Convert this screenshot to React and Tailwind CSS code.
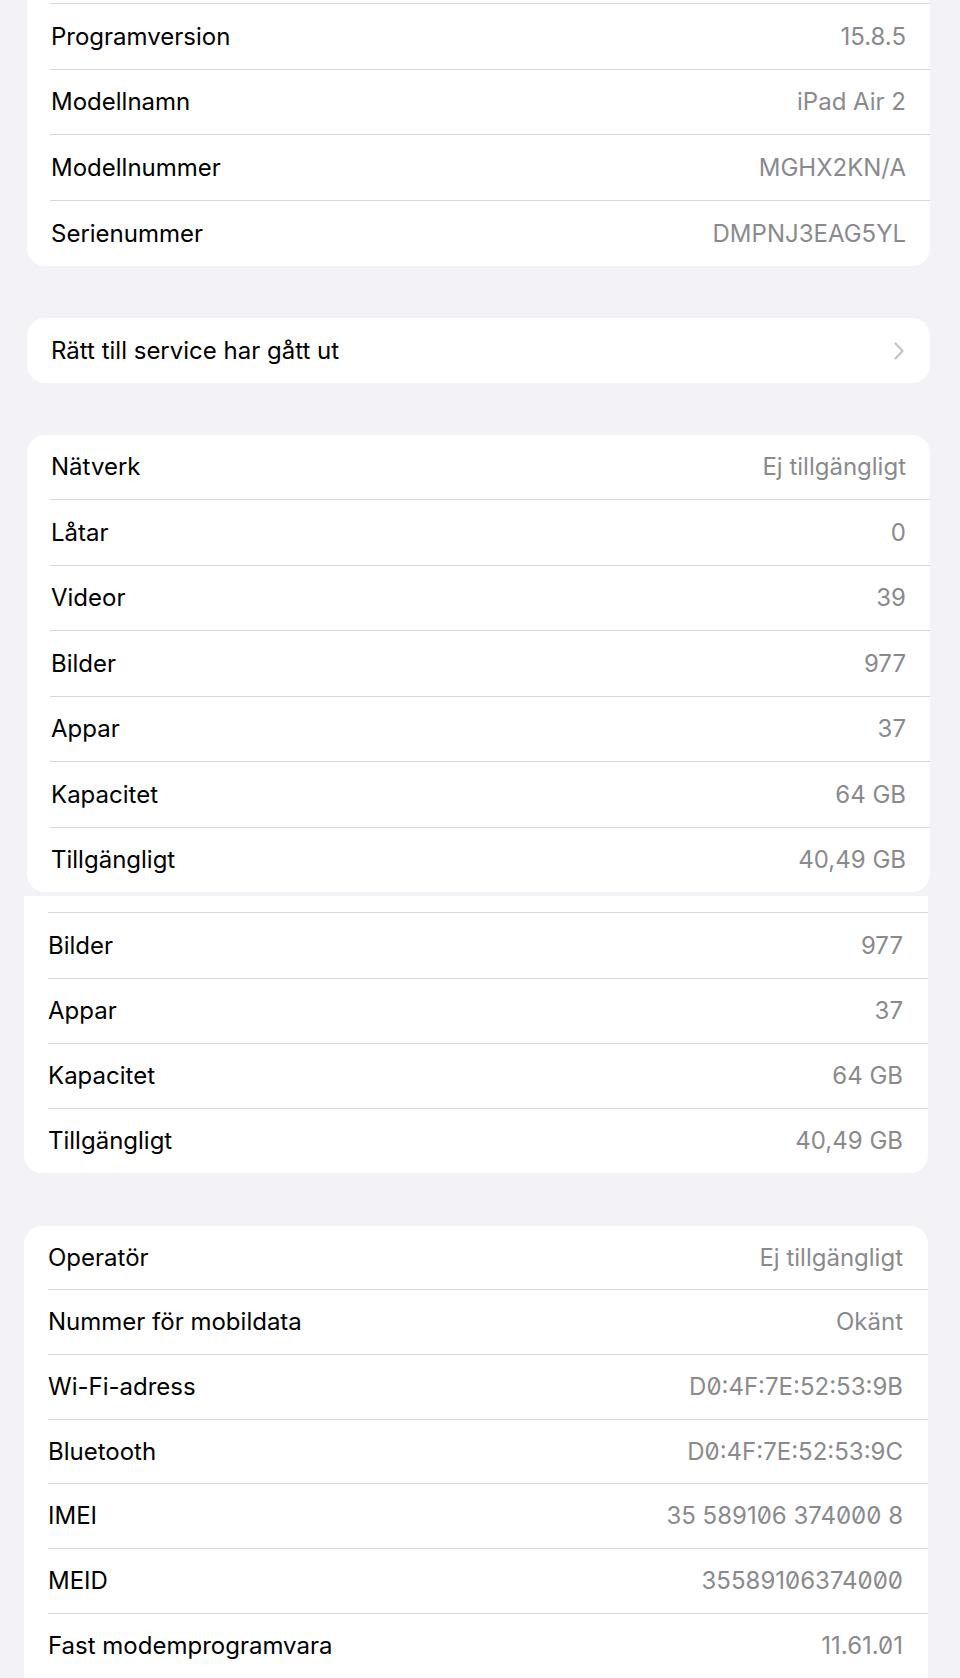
import React from 'react'

const sep = 'border-t border-[#d8d8dc]'

const Row = ({ label, value, h, first, mono, inset = 'pl-[23px]', pad = 'pl-px pr-6', chevron }) => (
  <div className={inset}>
    <div className={`flex items-center justify-between ${pad} ${first ? '' : sep}`} style={{ height: h }}>
      <span className="text-black">{label}</span>
      {chevron ? (
        <svg width="12" height="20" viewBox="0 0 12 20" fill="none" className="mr-[1px]">
          <path d="M2.5 2.5 L9.5 10 L2.5 17.5" stroke="#c4c4c8" strokeWidth="2.2" strokeLinecap="round" strokeLinejoin="round" />
        </svg>
      ) : (
        <span className={`text-[#8a8a8e] ${mono ? 'slashed-zero' : ''}`}>{value}</span>
      )}
    </div>
  </div>
)

export default function App() {
  const cardA = [
    ['Programversion', '15.8.5', 66],
    ['Modellnamn', 'iPad Air 2', 65],
    ['Modellnummer', 'MGHX2KN/A', 66],
    ['Serienummer', 'DMPNJ3EAG5YL', 66],
  ]
  const cardC = [
    ['Nätverk', 'Ej tillgängligt', 64],
    ['Låtar', '0', 66],
    ['Videor', '39', 65],
    ['Bilder', '977', 66],
    ['Appar', '37', 65],
    ['Kapacitet', '64 GB', 66],
    ['Tillgängligt', '40,49 GB', 65],
  ]
  const cardE = [
    ['Bilder', '977', 66],
    ['Appar', '37', 65],
    ['Kapacitet', '64 GB', 65],
    ['Tillgängligt', '40,49 GB', 65],
  ]
  const cardD = [
    ['Operatör', 'Ej tillgängligt', 63, false],
    ['Nummer för mobildata', 'Okänt', 65, false],
    ['Wi-Fi-adress', 'D0:4F:7E:52:53:9B', 65, true],
    ['Bluetooth', 'D0:4F:7E:52:53:9C', 64, true],
    ['IMEI', '35 589106 374000 8', 65, true],
    ['MEID', '35589106374000', 65, true],
    ['Fast modemprogramvara', '11.61.01', 65, true],
  ]

  return (
    <div className="w-[960px] h-[1678px] overflow-hidden bg-[#f2f2f7] font-['Inter','Noto_Sans',sans-serif] text-[24px]">
      {/* first capture */}
      <div className="pl-[27px] pr-[30px]">
        <div className="bg-white rounded-b-[18px]">
          <div className="h-[3px]" />
          {cardA.map(([l, v, h]) => (
            <Row key={l} label={l} value={v} h={h} />
          ))}
        </div>

        <div className="h-[52px]" />
        <div className="bg-white rounded-[18px]">
          <Row label="Rätt till service har gått ut" h={65} first chevron />
        </div>

        <div className="h-[52px]" />
        <div className="bg-white rounded-[18px]">
          {cardC.map(([l, v, h], i) => (
            <Row key={l} label={l} value={v} h={h} first={i === 0} />
          ))}
        </div>
        <div className="h-[4px]" />
      </div>

      {/* second capture */}
      <div className="pl-[24px] pr-[32px]">
        <div className="bg-white rounded-b-[18px]">
          <div className="h-[16px]" />
          {cardE.map(([l, v, h]) => (
            <Row key={l} label={l} value={v} h={h} inset="pl-[24px]" pad="pr-[25px]" />
          ))}
        </div>

        <div className="h-[53px]" />
        <div className="bg-white rounded-t-[18px]">
          {cardD.map(([l, v, h, mono], i) => (
            <Row key={l} label={l} value={v} h={h} mono={mono} first={i === 0} inset="pl-[24px]" pad="pr-[25px]" />
          ))}
        </div>
      </div>
    </div>
  )
}
